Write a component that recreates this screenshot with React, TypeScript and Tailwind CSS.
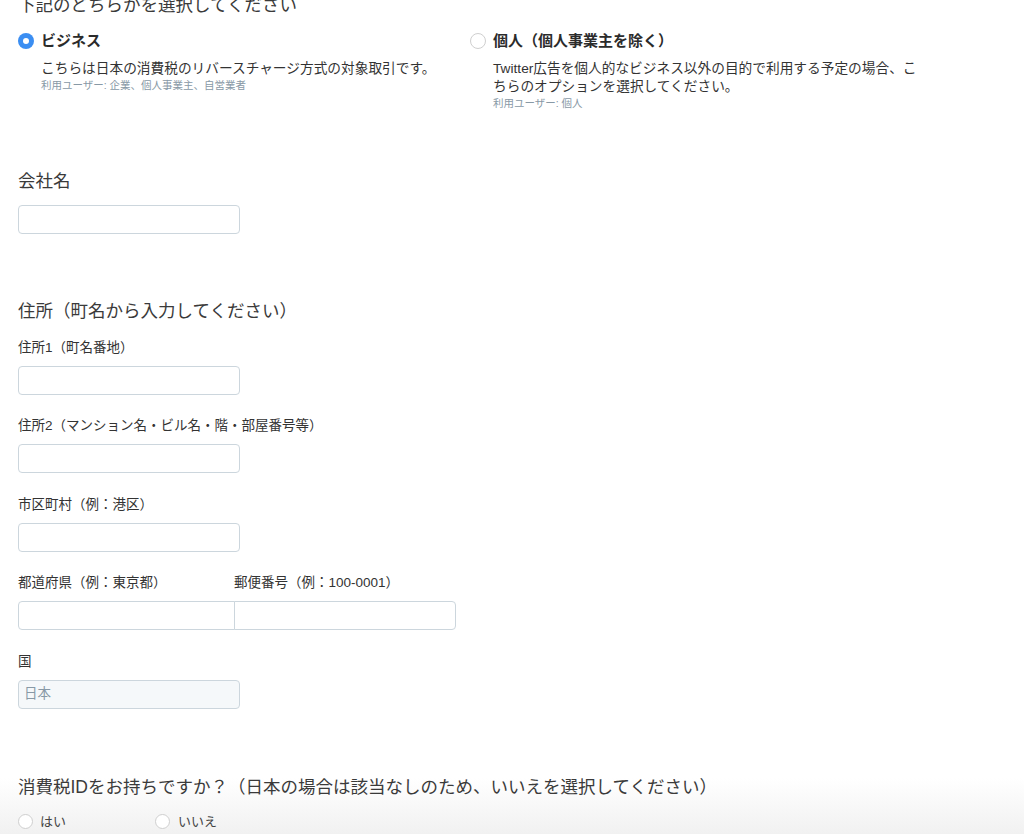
const font = { fontFamily: '"Liberation Sans", "Noto Sans CJK JP", sans-serif' }

function Radio({ checked, size = 16 }: { checked?: boolean; size?: number }) {
  if (checked) {
    return (
      <span className="flex shrink-0 items-center justify-center rounded-full bg-[#3b8ef2] w-[16px] h-[16px]">
        <span className="block w-[6px] h-[6px] rounded-full bg-white" />
      </span>
    )
  }
  return (
    <span
      className="block shrink-0 rounded-full border border-[#cfcfcf] bg-white"
      style={{ width: size, height: size }}
    />
  )
}

function Field({ label, className = '' }: { label: string; className?: string }) {
  return (
    <div className={className}>
      <div className="text-[13.5px] leading-[18px] text-[#333]">{label}</div>
      <input className="mt-[9px] block w-[222px] h-[29px] rounded-[4px] border border-[#ccd6dd] bg-white outline-none" />
    </div>
  )
}

function Choice({
  checked,
  title,
  desc,
  users,
}: {
  checked?: boolean
  title: string
  desc: React.ReactNode
  users: string
}) {
  return (
    <div>
      <div className="flex items-center h-[20px]">
        <Radio checked={checked} />
        <span className="ml-[7px] text-[15px] font-bold text-[#2b2b2b]">{title}</span>
      </div>
      <div className="pl-[23px]">
        <p className="mt-[9px] text-[13.7px] leading-[18px] text-[#333]">{desc}</p>
        <p className="text-[10.5px] leading-[14px] text-[#8899a6]">{users}</p>
      </div>
    </div>
  )
}

export default function App() {
  return (
    <div className="relative min-h-[834px] overflow-hidden bg-white" style={font}>
      <div className="pointer-events-none absolute inset-x-0 bottom-0 h-[56px] bg-gradient-to-b from-white to-[#f1f1f1]" />

      <div className="relative px-[18px] -mt-[7px]">
        <h2 className="text-[17.5px] leading-[24px] text-[#3a3a3a]">下記のどちらかを選択してください</h2>

        <div className="mt-[14px] flex">
          <div className="w-[452px]">
            <Choice
              checked
              title="ビジネス"
              desc="こちらは日本の消費税のリバースチャージ方式の対象取引です。"
              users="利用ユーザー: 企業、個人事業主、自営業者"
            />
          </div>
          <div>
            <Choice
              title="個人（個人事業主を除く）"
              desc={
                <>
                  Twitter広告を個人的なビジネス以外の目的で利用する予定の場合、こ
                  <br />
                  ちらのオプションを選択してください。
                </>
              }
              users="利用ユーザー: 個人"
            />
          </div>
        </div>

        <h3 className="mt-[59px] text-[17.5px] leading-[24px] text-[#3a3a3a]">会社名</h3>
        <input className="mt-[12px] block w-[222px] h-[29px] rounded-[4px] border border-[#ccd6dd] bg-white outline-none" />

        <h3 className="mt-[65px] text-[17.5px] leading-[24px] text-[#3a3a3a]">住所（町名から入力してください）</h3>

        <Field className="mt-[16px]" label="住所1（町名番地）" />
        <Field className="mt-[22px]" label="住所2（マンション名・ビル名・階・部屋番号等）" />
        <Field className="mt-[23px]" label="市区町村（例：港区）" />

        <div className="mt-[22px]">
          <div className="flex text-[13.5px] leading-[18px] text-[#333]">
            <span className="w-[216px]">都道府県（例：東京都）</span>
            <span>郵便番号（例：100-0001）</span>
          </div>
          <div className="mt-[9px] flex">
            <input className="block w-[217px] h-[29px] rounded-l-[4px] border border-[#ccd6dd] bg-white outline-none" />
            <input className="block -ml-[1px] w-[222px] h-[29px] rounded-r-[4px] border border-[#ccd6dd] bg-white outline-none" />
          </div>
        </div>

        <div className="mt-[23px]">
          <div className="text-[13.5px] leading-[18px] text-[#333]">国</div>
          <div className="mt-[9px] flex items-center w-[222px] h-[29px] rounded-[4px] border border-[#ccd6dd] bg-[#f5f8fa] px-[5px] text-[13.5px] text-[#8899a6]">
            日本
          </div>
        </div>

        <h3 className="mt-[66px] text-[17.5px] leading-[24px] text-[#3a3a3a]">
          消費税IDをお持ちですか？（日本の場合は該当なしのため、いいえを選択してください）
        </h3>

        <div className="mt-[13px] flex items-center text-[13px] text-[#444]">
          <div className="flex items-center w-[137px]">
            <Radio size={15} />
            <span className="ml-[7px]">はい</span>
          </div>
          <div className="flex items-center">
            <Radio size={15} />
            <span className="ml-[8px]">いいえ</span>
          </div>
        </div>
      </div>
    </div>
  )
}
